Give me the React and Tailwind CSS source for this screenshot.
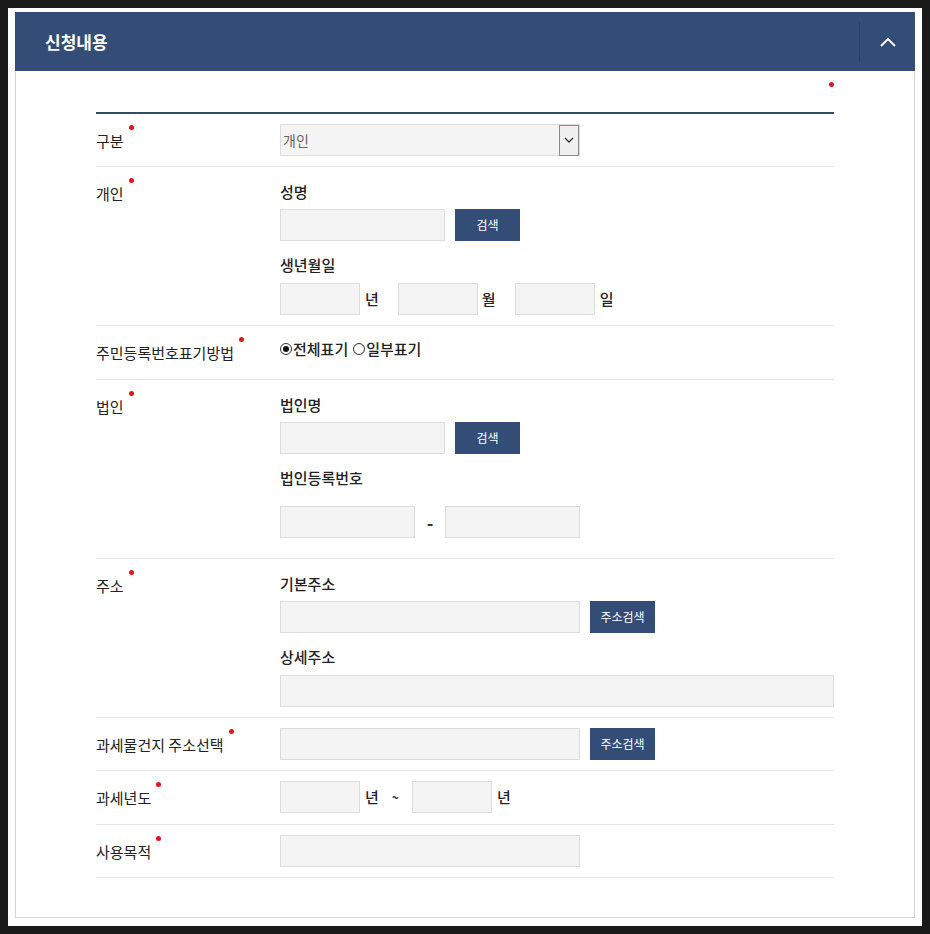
import clsx from "clsx";

// required marker
const Dot = ({ className }) => (
  <span className={clsx("inline-block h-[5px] w-[5px] rounded-full bg-[#e3131b]", className)} />
);

const Field = ({ className }) => (
  <input
    type="text"
    className={clsx("block h-[32px] border border-[#dcdcdc] bg-[#f4f4f4] outline-none", className)}
  />
);

const Btn = ({ children }) => (
  <button className="h-[32px] w-[65px] shrink-0 bg-[#344d77] text-[12px] text-white">{children}</button>
);

const Sub = ({ children, className }) => (
  <p className={clsx("h-[29px] text-[15px] font-medium leading-[29px] text-[#222]", className)}>{children}</p>
);

const Unit = ({ children, className }) => (
  <span className={clsx("text-[15px] font-medium text-[#222]", className)}>{children}</span>
);

function Row({ label, children, className }) {
  return (
    <div className="grid grid-cols-[184px_1fr] border-b border-[#e6e6e6]">
      <div className="pt-[17px] text-[15px] leading-5 text-[#222]">
        {label}
        <Dot className="relative -top-[15px] ml-[5px] align-middle" />
      </div>
      <div className={clsx("pt-[10px]", className ?? "pb-[10px]")}>{children}</div>
    </div>
  );
}

function Radio({ checked, children }) {
  return (
    <label className="flex items-center">
      <span className="flex h-[12px] w-[12px] items-center justify-center rounded-full border border-[#333] bg-white">
        {checked && <span className="h-[6px] w-[6px] rounded-full bg-[#111]" />}
      </span>
      <span className="ml-[1px] text-[15px] font-medium text-[#222]">{children}</span>
    </label>
  );
}

export default function App() {
  return (
    <div className="min-h-[934px] bg-[#1a1a1a] p-[8px] font-['Noto_Sans_CJK_KR',sans-serif]">
      <div className="h-[918px] w-[914px] bg-white px-[7px] pt-[4px]">
        <div className="flex h-[59px] items-center bg-[#344d77]">
          <h2 className="flex-1 pl-[30px] text-[17px] font-bold text-white">신청내용</h2>
          <div className="h-[40px] w-px bg-[#2a3f63]" />
          <button className="flex h-full w-[55px] items-center justify-center">
            <svg width="16" height="10" viewBox="0 0 16 10" fill="none" stroke="white" strokeWidth="1.8">
              <polyline points="1,9 8,2 15,9" />
            </svg>
          </button>
        </div>

        <div className="h-[847px] border-x border-b border-[#d5d5d5] px-[80px]">
          <div className="flex h-[41px] justify-end pt-[11px]">
            <Dot />
          </div>

          <div className="border-t-2 border-[#36486b]">
            <Row label="구분">
              <div className="flex h-[32px] w-[300px] items-center border border-[#dcdcdc] bg-[#f4f4f4]">
                <span className="flex-1 pl-[2px] text-[14px] text-[#666]">개인</span>
                <span className="flex h-[31px] w-[20px] items-center justify-center border border-[#8a8a8a] bg-[#f0f0f0]">
                  <svg width="10" height="6" viewBox="0 0 10 6" fill="none" stroke="#333" strokeWidth="1.3">
                    <polyline points="1,1 5,5 9,1" />
                  </svg>
                </span>
              </div>
            </Row>

            <Row label="개인">
              <Sub>성명</Sub>
              <div className="mt-[3px] flex gap-[10px]">
                <Field className="w-[165px]" />
                <Btn>검색</Btn>
              </div>
              <Sub className="mt-[9px]">생년월일</Sub>
              <div className="mt-[4px] flex items-center">
                <Field className="w-[80px]" />
                <Unit className="ml-[5px] mr-[19px]">년</Unit>
                <Field className="w-[80px]" />
                <Unit className="ml-[4px] mr-[19px]">월</Unit>
                <Field className="w-[80px]" />
                <Unit className="ml-[5px]">일</Unit>
              </div>
            </Row>

            <Row label="주민등록번호표기방법" className="pb-[17px]">
              <div className="flex h-[26px] items-center gap-[5px]">
                <Radio checked>전체표기</Radio>
                <Radio>일부표기</Radio>
              </div>
            </Row>

            <Row label="법인" className="pb-[20px]">
              <Sub>법인명</Sub>
              <div className="mt-[3px] flex gap-[10px]">
                <Field className="w-[165px]" />
                <Btn>검색</Btn>
              </div>
              <Sub className="mt-[9px]">법인등록번호</Sub>
              <div className="mt-[14px] flex items-center">
                <Field className="w-[135px]" />
                <span className="w-[30px] text-center text-[18px] font-bold leading-none text-[#333]">-</span>
                <Field className="w-[135px]" />
              </div>
            </Row>

            <Row label="주소">
              <Sub>기본주소</Sub>
              <div className="mt-[3px] flex gap-[10px]">
                <Field className="w-[300px]" />
                <Btn>주소검색</Btn>
              </div>
              <Sub className="mt-[9px]">상세주소</Sub>
              <Field className="mt-[4px] w-full" />
            </Row>

            <Row label="과세물건지 주소선택">
              <div className="flex gap-[10px]">
                <Field className="w-[300px]" />
                <Btn>주소검색</Btn>
              </div>
            </Row>

            <Row label="과세년도" className="pb-[11px]">
              <div className="flex items-center">
                <Field className="w-[80px]" />
                <Unit className="ml-[5px]">년</Unit>
                <span className="mx-[13px] text-[12px] font-bold text-[#333]">~</span>
                <Field className="w-[80px]" />
                <Unit className="ml-[5px]">년</Unit>
              </div>
            </Row>

            <Row label="사용목적">
              <Field className="w-[300px]" />
            </Row>
          </div>
        </div>
      </div>
    </div>
  );
}
